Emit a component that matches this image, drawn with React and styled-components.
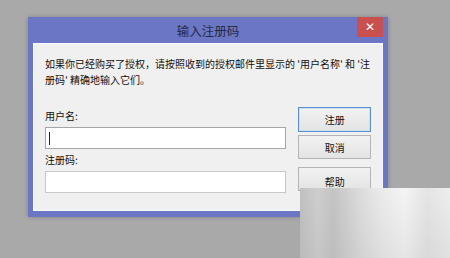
import styled, { createGlobalStyle } from "styled-components";

const GlobalStyle = createGlobalStyle`
  html, body {
    margin: 0;
    padding: 0;
    background: #a9a9a9;
    font-family: "Noto Sans CJK SC", "Noto Sans", sans-serif;
  }
`;

const Screen = styled.div`
  position: relative;
  width: 450px;
  height: 258px;
  overflow: hidden;
  padding: 17px 0 0 28px;
  box-sizing: border-box;
`;

const Window = styled.div`
  width: 360px;
  background: #6b77c4;
  padding: 0 5px 6px;
  box-sizing: border-box;
  box-shadow: 0 0 4px rgba(60, 60, 60, 0.35);
`;

const TitleBar = styled.div`
  position: relative;
  height: 26px;
  display: flex;
  align-items: center;
  justify-content: center;
  color: #262a4a;
  font-size: 12.5px;
`;

const CloseButton = styled.div`
  position: absolute;
  top: 0;
  right: 0;
  width: 26px;
  height: 20px;
  background: #c9504c;
  color: #fff;
  display: flex;
  align-items: center;
  justify-content: center;
  font-size: 12px;
  font-family: "DejaVu Sans", sans-serif;
`;

const Client = styled.div`
  background: #f0f0f0;
  height: 168px;
  padding: 12px 11px 0 11px;
  box-sizing: border-box;
  border: 1px solid #fafafa;
`;

const Intro = styled.p`
  margin: 0;
  font-size: 10px;
  line-height: 16px;
  color: #111;
  width: 332px;
`;

const Form = styled.div`
  display: flex;
  gap: 12px;
  margin-top: 21px;
`;

const Fields = styled.div`
  width: 243px;
  display: flex;
  flex-direction: column;
`;

const Label = styled.label`
  font-size: 10px;
  line-height: 14px;
  color: #111;
  margin-top: ${({ $gap }) => $gap || 0}px;
`;

const Input = styled.div`
  height: 22px;
  margin-top: 4px;
  background: #fff;
  border: 1px solid ${({ $focus }) => ($focus ? "#a6a6a6" : "#c8c8c8")};
  box-sizing: border-box;
  display: flex;
  align-items: center;
  padding-left: 3px;
`;

const Caret = styled.span`
  width: 1px;
  height: 13px;
  background: #222;
`;

const Buttons = styled.div`
  display: flex;
  flex-direction: column;
  width: 73px;
  margin-top: -2px;
`;

const Button = styled.div`
  height: ${({ $h }) => $h || 24}px;
  margin-top: ${({ $gap }) => $gap || 0}px;
  box-sizing: border-box;
  border: 1px solid ${({ $default }) => ($default ? "#5b8ed0" : "#b4b4b4")};
  box-shadow: ${({ $default }) =>
    $default ? "inset 0 0 0 1px #cfe0f2" : "none"};
  background: linear-gradient(#f2f2f2, #e3e3e3);
  font-size: 10px;
  color: #111;
  display: flex;
  align-items: center;
  justify-content: center;
  padding-top: ${({ $low }) => ($low ? 6 : 0)}px;
  align-items: ${({ $low }) => ($low ? "flex-start" : "center")};
`;

const Watermark = styled.div`
  position: absolute;
  left: 300px;
  top: 188px;
  width: 150px;
  height: 70px;
  background:
    linear-gradient(180deg, rgba(255, 255, 255, 0.1), rgba(190, 190, 190, 0.25)),
    linear-gradient(90deg, #b9b9b9 0%, #c9c9c9 12%, #bdbdbd 22%, #d8d8d8 40%, #e9e9e9 55%, #f3f3f3 70%, #e2e2e2 85%, #ececec 100%);
`;

export default function App() {
  return (
    <>
      <GlobalStyle />
      <Screen>
        <Window>
          <TitleBar>
            输入注册码
            <CloseButton>✕</CloseButton>
          </TitleBar>
          <Client>
            <Intro>
              如果你已经购买了授权，请按照收到的授权邮件里显示的 '用户名称' 和 '注册码' 精确地输入它们。
            </Intro>
            <Form>
              <Fields>
                <Label>用户名:</Label>
                <Input $focus>
                  <Caret />
                </Input>
                <Label $gap={4}>注册码:</Label>
                <Input />
              </Fields>
              <Buttons>
                <Button $default $h={25}>注册</Button>
                <Button $gap={3}>取消</Button>
                <Button $gap={8} $low>帮助</Button>
              </Buttons>
            </Form>
          </Client>
        </Window>
        <Watermark />
      </Screen>
    </>
  );
}
